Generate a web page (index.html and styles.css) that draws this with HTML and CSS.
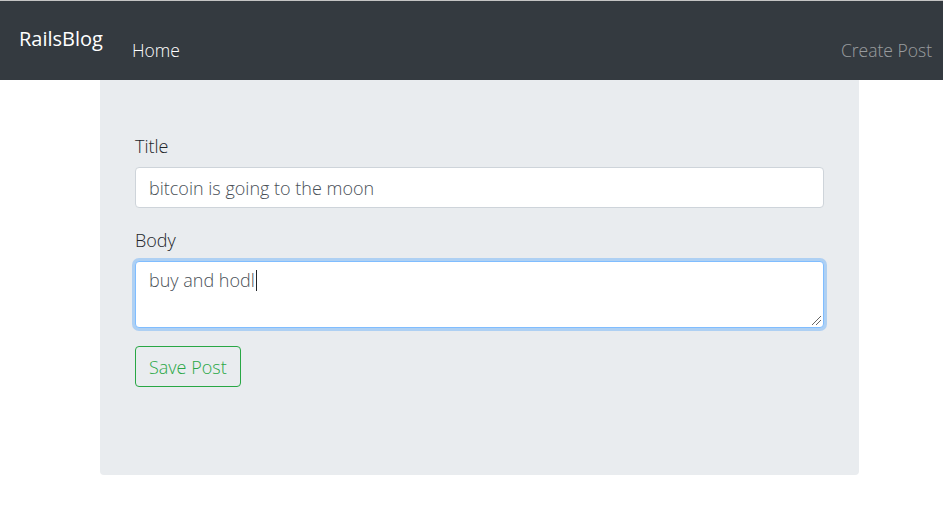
FILE: index.html
```html
<!DOCTYPE html>
<html lang="en">
<head>
<meta charset="utf-8">
<title>RailsBlog</title>
<link rel="stylesheet" href="styles.css">
</head>
<body>
<nav class="navbar">
  <a class="brand" href="#">RailsBlog</a>
  <ul class="nav-left">
    <li><a class="nav-link active" href="#">Home</a></li>
  </ul>
  <ul class="nav-right">
    <li><a class="nav-link" href="#">Create Post</a></li>
  </ul>
</nav>
<main class="jumbotron">
  <form class="post-form">
    <div class="form-group">
      <label class="form-label" for="title">Title</label>
      <input class="form-control" id="title" type="text" value="bitcoin is going to the moon">
    </div>
    <div class="form-group">
      <label class="form-label" for="body">Body</label>
      <div class="form-control textarea focused">buy and hodl<span class="caret"></span><span class="grip"></span></div>
    </div>
    <button class="btn-outline-success" type="button">Save Post</button>
  </form>
</main>
</body>
</html>
```

FILE: styles.css
```css
* { box-sizing: border-box; }
html, body { margin: 0; padding: 0; }
body {
  font-family: "Open Sans", "Liberation Sans", sans-serif;
  font-weight: 300;
  font-size: 18px;
  color: #212529;
  background: #fff;
  border-top: 1px solid #c4c4c4;
}
a { text-decoration: none; }
ul { list-style: none; margin: 0; padding: 0; }

.navbar {
  height: 79px;
  background: #343a40;
  display: flex;
  align-items: center;
  padding: 0 11px 0 19px;
}
.brand {
  color: #fff;
  font-size: 20px;
  font-weight: 400;
  line-height: 30px;
  margin-top: -4px;
}
.nav-left { margin-left: 29px; margin-top: 18px; flex: 1; }
.nav-right { margin-top: 18px; }
.nav-link {
  display: block;
  font-size: 17.5px;
  line-height: 24px;
  color: rgba(255,255,255,.5);
}
.nav-link.active { color: #fff; }

.jumbotron {
  margin: 0 84px 0 100px;
  background: #e9ecef;
  border-radius: 0 0 4px 4px;
  padding: 54px 35px 88px 35px;
}
.form-group { margin-bottom: 20px; }
.form-label {
  display: block;
  line-height: 24px;
  margin-bottom: 9px;
  font-weight: 300;
}
.form-control {
  display: block;
  width: 100%;
  height: 41px;
  padding: 7px 13px;
  font-family: inherit;
  font-weight: 300;
  font-size: 18px;
  line-height: 25px;
  color: #495057;
  background: #fff;
  border: 1px solid #ced4da;
  border-radius: 4px;
  outline: none;
}
.textarea {
  position: relative;
  height: 67px;
  padding-top: 6px;
}
.focused {
  border-color: #80bdff;
  box-shadow: 0 0 0 3px rgba(0,123,255,.25);
}
.caret {
  display: inline-block;
  width: 1px;
  height: 21px;
  background: #212529;
  vertical-align: -4px;
  margin-left: 1px;
}
.grip {
  position: absolute;
  right: 2px;
  bottom: 2px;
  width: 9px;
  height: 9px;
  background: linear-gradient(135deg, transparent 45%, #666 45%, #666 52%, transparent 52%, transparent 70%, #666 70%, #666 77%, transparent 77%);
}
.btn-outline-success {
  display: inline-block;
  margin-top: -2px;
  height: 41px;
  padding: 0 13px;
  font-family: inherit;
  font-weight: 300;
  font-size: 18px;
  color: #28a745;
  background: transparent;
  border: 1px solid #28a745;
  border-radius: 4px;
}
```
